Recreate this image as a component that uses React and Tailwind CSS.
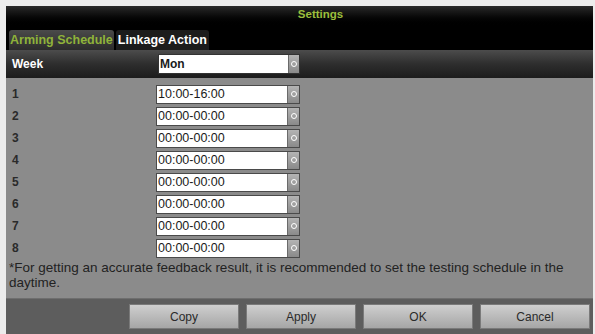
import React from "react";

const rows = [
  "10:00-16:00",
  "00:00-00:00",
  "00:00-00:00",
  "00:00-00:00",
  "00:00-00:00",
  "00:00-00:00",
  "00:00-00:00",
  "00:00-00:00",
];

function SideButton({ w = "w-[12px]" }) {
  return (
    <div
      className={`${w} h-full flex items-center justify-center bg-gradient-to-b from-[#b4b4b4] to-[#8a8a8a] border-l border-[#6a6a6a]`}
    >
      <div className="w-[6px] h-[6px] rounded-full border border-white" />
    </div>
  );
}

function TimeRow({ n, value }) {
  return (
    <div className="flex items-center h-[22px]">
      <span className="w-[150px] pl-[6px] text-[12px] font-bold text-[#2a2a2a]">{n}</span>
      <div className="flex h-[19px] w-[144px] border border-[#4a4a4a] bg-white">
        <span className="flex-1 pl-[1px] leading-[17px] text-[12.5px] text-[#1a1a1a]">{value}</span>
        <SideButton />
      </div>
    </div>
  );
}

export default function App() {
  return (
    <div
      className="w-[595px] h-[334px] bg-[#ececec] pt-[6px] pl-[6px] pr-[2px] overflow-hidden"
      style={{ fontFamily: '"Liberation Sans", Arial, sans-serif' }}
    >
      <div className="h-[328px] flex flex-col bg-black">
        <div className="h-[21px] flex items-center justify-center pl-[42px] pb-[3px] bg-gradient-to-b from-[#2a2a2a] to-black">
          <span className="text-[11.5px] font-bold text-[#9cbf3c]">Settings</span>
        </div>
        <div className="h-[23px] flex items-end pl-[3px] gap-[2px]">
          <div className="h-[20px] px-[1px] flex items-center rounded-t-[3px] bg-gradient-to-b from-[#4a4a4a] to-[#2c2c2c]">
            <span className="text-[12.5px] font-bold text-[#8fb33a]">Arming Schedule</span>
          </div>
          <div className="h-[20px] px-[2px] flex items-center rounded-t-[3px] bg-[#1c1c1c]">
            <span className="text-[12.5px] font-bold text-white">Linkage Action</span>
          </div>
        </div>
        <div className="h-[28px] flex items-center bg-gradient-to-b from-[#4c4c4c] via-[#2e2e2e] to-[#1c1c1c]">
          <span className="w-[152px] pl-[6px] text-[12px] font-bold text-white">Week</span>
          <div className="flex h-[20px] w-[142px] bg-white border border-[#333]">
            <span className="flex-1 pl-[1px] leading-[18px] text-[12px] font-bold text-[#1a1a1a]">Mon</span>
            <SideButton w="w-[11px]" />
          </div>
        </div>
        <div className="flex-1 flex flex-col bg-[#8b8b8b] pt-[5px]">
          {rows.map((v, i) => (
            <TimeRow key={i} n={i + 1} value={v} />
          ))}
          <p className="px-[3px] pt-[1px] text-[13.5px] leading-[15px] text-[#222]">
            *For getting an accurate feedback result, it is recommended to set the testing schedule in the daytime.
          </p>
        </div>
        <div className="h-[36px] flex items-center justify-end gap-[7px] pr-[3px] bg-[#5d5d5d] border-t border-[#6e6e6e]">
          {["Copy", "Apply", "OK", "Cancel"].map((b) => (
            <div
              key={b}
              className="w-[110px] h-[25px] flex items-center justify-center bg-gradient-to-b from-[#cfcfcf] to-[#a6a6a6] border border-[#7a7a7a]"
            >
              <span className="text-[12px] text-[#2a2a2a]">{b}</span>
            </div>
          ))}
        </div>
      </div>
    </div>
  );
}
